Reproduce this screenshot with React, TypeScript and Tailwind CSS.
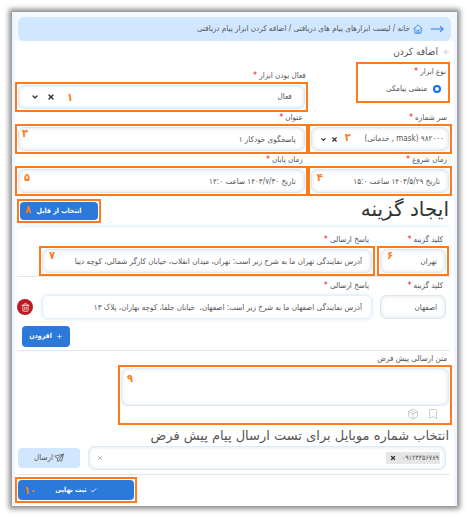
import React from 'react';
import { Bookmark, Check, ChevronDown, MoveRight, Package, Plus, Trash2, X } from 'lucide-react';
import { clsx } from 'clsx';

interface MarkProps {
  step?: string;
  stepClass?: string;
  className?: string;
  children: React.ReactNode;
}

// Numbered orange frame used for the walkthrough steps
const Mark: React.FC<MarkProps> = ({ step, stepClass = 'left-2 top-0', className, children }) => (
  <div
    className={clsx(
      'relative border-2 p-px',
      step === undefined ? 'border-transparent' : 'border-[#ff7a1a]',
      className
    )}
  >
    {children}
    {step && (
      <span className={clsx('pointer-events-none absolute text-[11px] font-bold leading-4 text-[#ff7a1a]', stepClass)}>
        {step}
      </span>
    )}
  </div>
);

interface LabelProps {
  htmlFor?: string;
  required?: boolean;
  className?: string;
  children: React.ReactNode;
}

const Label: React.FC<LabelProps> = ({ htmlFor, required = true, className, children }) => (
  <label htmlFor={htmlFor} className={clsx('block whitespace-nowrap text-[8px] leading-3 text-[#555]', className)}>
    {children}
    {required && <span className="text-red-600"> *</span>}
  </label>
);

const fieldClass =
  'h-6 w-full rounded-md border border-[#dfe6ec] bg-white text-[8px] text-[#555] outline-none shadow-[inset_0_0_4px_#dbe3ea]';

interface SelectProps {
  id: string;
  value: string;
  tight?: boolean;
}

const SelectField: React.FC<SelectProps> = ({ id, value, tight }) => (
  <div className={clsx(fieldClass, 'flex items-center', tight ? 'gap-1 pl-2 pr-1' : 'gap-2 pl-3 pr-3')}>
    <select id={id} className="min-w-0 flex-1 appearance-none bg-transparent outline-none">
      <option>{value}</option>
    </select>
    <button type="button" aria-label="پاک کردن">
      <X className={tight ? 'size-[7px]' : 'size-2'} strokeWidth={4} color="#333" />
    </button>
    <ChevronDown className={tight ? 'size-[7px]' : 'size-2'} strokeWidth={4} color="#333" />
  </div>
);

interface OptionRowProps {
  id: string;
  optionKey: string;
  answer: string;
  steps?: [string, string];
  removable?: boolean;
}

const OptionRow: React.FC<OptionRowProps> = ({ id, optionKey, answer, steps, removable }) => (
  <div className="flex gap-[2px] pr-px">
    <div className="w-1/6 shrink-0">
      <Label htmlFor={`${id}-key`} className="pr-[6px]">کلید گزینه</Label>
      <Mark step={steps?.[0]}>
        <input id={`${id}-key`} className={clsx(fieldClass, 'block px-2')} defaultValue={optionKey} />
      </Mark>
    </div>
    <div className="min-w-0 flex-1">
      <Label htmlFor={`${id}-answer`} className="pr-[6px]">پاسخ ارسالی</Label>
      <Mark step={steps?.[1]}>
        <input
          id={`${id}-answer`}
          className={clsx(
            'block h-6 w-full rounded-md border bg-white px-[9px] text-[8px] text-[#555] outline-none',
            steps ? 'border-[#dfe6ec] shadow-[inset_0_0_4px_#dbe3ea]' : 'border-[#e0efff] shadow-[0_0_4px_#d6e9ff]'
          )}
          defaultValue={answer}
        />
      </Mark>
    </div>
    <div className="flex w-5 shrink-0 items-end justify-end pb-[7px]">
      {removable && (
        <button type="button" aria-label="حذف" className="flex size-4 shrink-0 items-center justify-center rounded-full bg-[#bd1a22] text-white">
          <Trash2 className="size-[9px]" />
        </button>
      )}
    </div>
  </div>
);

const HomeIcon = () => (
  <svg viewBox="0 0 24 24" className="size-[10px]" fill="none" stroke="#2f80dd" strokeWidth="2" strokeLinejoin="round" strokeLinecap="round">
    <path d="M2 11.5 12 2l10 9.5" />
    <path d="M4.5 10v12h15V10" />
    <path d="M9.5 22v-7h5v7" />
  </svg>
);

const SendIcon = () => (
  <svg viewBox="0 0 24 24" className="size-[10px]" fill="none" stroke="#666" strokeWidth="2" strokeLinejoin="round" strokeLinecap="round">
    <path d="M22 3 1.5 7.5 8 13l1 8 4-4.5 4.5 3z" />
    <path d="M22 3 8 13M22 3l-9 13.5" />
  </svg>
);

export default function App() {
  return (
    <div dir="rtl" className="flow-root bg-white font-['DejaVu_Sans_Condensed','DejaVu_Sans',sans-serif] text-[#555]">
      <main className="m-3 border-x-[3px] border-[#eff6ff] bg-white pb-[3px] shadow-[0_0_5px_3px_#8b8b8b]">
        <div className="bg-[#f4f9ff] pt-[5px]">
          <nav className="mx-[3px] flex h-6 items-center gap-[7px] rounded-md bg-[#d1e7ff] pr-[7px] text-[8px]">
            <a href="#" aria-label="بازگشت"><MoveRight className="size-[14px]" color="#2f80dd" /></a>
            <a href="#" aria-label="خانه"><HomeIcon /></a>
            <span className="-mr-1 whitespace-nowrap">
              <a href="#">خانه</a> / <a href="#">لیست ابزارهای پیام های دریافتی</a> / اضافه کردن ابزار پیام دریافتی
            </span>
          </nav>
        </div>

        <h1 className="flex h-[21px] items-center gap-1 pr-1 text-[10px]">
          <Plus className="size-2" color="#bbb" />
          اضافه کردن
        </h1>

        <form onSubmit={(e) => e.preventDefault()}>
          <div className="grid grid-cols-[33fr_67fr] pr-[2px]">
            <fieldset className="ml-12 mr-[2px] h-[41px] border-2 border-[#ff7a1a] pr-[2px]">
              <legend className="float-right w-full text-[8px] leading-4">
                نوع ابزار <span className="text-red-600">*</span>
              </legend>
              <label className="clear-both flex items-center gap-[6px] pr-[5px] text-[8px] leading-[18px]">
                <input type="radio" name="kind" defaultChecked className="size-2 appearance-none rounded-full border-2 border-[#0d6efd] bg-white" />
                منشی پیامکی
              </label>
            </fieldset>
            <div className="self-end pt-2">
              <Label htmlFor="active" className="pr-[2px]">فعال بودن ابزار</Label>
              <Mark step="۱" stepClass="left-[50px] top-[6px]">
                <SelectField id="active" value="فعال" />
              </Mark>
            </div>
            <div>
              <Label htmlFor="number" className="pr-[5px]">سر شماره</Label>
              <Mark step="۲" stepClass="left-[35px] top-1">
                <SelectField id="number" value="۹۸۲۰۰۰ (mask , خدماتی)" tight />
              </Mark>
            </div>
            <div>
              <Label htmlFor="title" className="pr-[5px]">عنوان</Label>
              <Mark step="۳" stepClass="left-[5px] top-0">
                <input id="title" className={clsx(fieldClass, 'block px-2')} defaultValue="پاسخگوی خودکار ۱" />
              </Mark>
            </div>
            <div>
              <Label htmlFor="start" className="pr-[5px]">زمان شروع</Label>
              <Mark step="۴" stepClass="left-[7px] top-[2px]">
                <input id="start" className={clsx(fieldClass, 'block px-2')} defaultValue="تاریخ ۱۴۰۳/۵/۲۹ ساعت ۱۵:۰" />
              </Mark>
            </div>
            <div>
              <Label htmlFor="end" className="pr-[5px]">زمان پایان</Label>
              <Mark step="۵" stepClass="left-[7px] top-[2px]">
                <input id="end" className={clsx(fieldClass, 'block px-2')} defaultValue="تاریخ ۱۴۰۳/۷/۳۰ ساعت ۱۴:۰" />
              </Mark>
            </div>
          </div>

          <div className="flex h-[30px] items-center justify-between pl-[2px] pr-[5px]">
            <h2 className="pb-1 font-['DejaVu_Sans',sans-serif] text-[20px] leading-6 text-[#333]">ایجاد گزینه</h2>
            <Mark step="۸" stepClass="left-[6px] top-px">
              <button type="button" className="block h-[18px] w-[78px] rounded bg-[#2b79d8] text-[7px] font-bold text-white">
                انتخاب از فایل
              </button>
            </Mark>
          </div>

          <section className="ml-[2px] mr-1 rounded-t-md border-t border-[#e6f1fd] pt-[7px] shadow-[0_-1px_4px_#eef6ff]">
            <OptionRow
              id="tehran"
              optionKey="تهران"
              answer="آدرس نمایندگی تهران ما به شرح زیر است: تهران، میدان انقلاب، خیابان کارگر شمالی، کوچه دیبا"
              steps={['۶', '۷']}
            />
            <hr className="border-[#e4e6e8]" />
            <div className="pt-[3px]">
              <OptionRow
                id="isfahan"
                optionKey="اصفهان"
                answer="آدرس نمایندگی اصفهان ما به شرح زیر است: اصفهان،  خیابان جلفا، کوچه بهاران، پلاک ۱۳"
                removable
              />
            </div>
            <div className="flex justify-end pb-[3px] pl-[5px] pt-1">
              <button type="button" className="flex h-[21px] w-12 items-center justify-center gap-1 rounded bg-[#2b79d8] text-[7px] font-bold text-white">
                <Plus className="size-[7px]" />
                افزودن
              </button>
            </div>
            <hr className="border-[#e4e6e8]" />
          </section>

          <div className="pl-[103px] pr-[2px] pt-[2px]">
            <Label htmlFor="default-text" required={false} className="pr-[5px]">متن ارسالی پیش فرض</Label>
            <Mark step="۹" stepClass="left-[7px] top-1">
              <textarea
                id="default-text"
                className="block h-[38px] w-full resize-none rounded-md border border-[#dcebfa] bg-white p-2 text-[8px] outline-none shadow-[inset_0_0_4px_#dbe3ea]"
              />
              <div className="flex h-4 items-center gap-2 pr-[10px]">
                <button type="button" aria-label="نشانه"><Bookmark className="size-3" color="#ccc" strokeWidth={2} /></button>
                <button type="button" aria-label="بسته"><Package className="size-3" color="#ccc" strokeWidth={2} /></button>
              </div>
            </Mark>
          </div>

          <h2 className="pr-[5px] font-['DejaVu_Sans',sans-serif] text-[13px] leading-[21px]">
            انتخاب شماره موبایل برای تست ارسال پیام پیش فرض
          </h2>
          <div className="flex items-center gap-2 pl-[3px] pr-2">
            <div className="flex h-6 flex-1 items-center justify-between rounded-md border border-[#dcebfa] pl-[7px] pr-[5px] shadow-[inset_0_0_4px_#dbe3ea]">
              <span className="flex h-3 items-center gap-[6px] bg-[#e6e6e6] pl-1 pr-px text-[7px]">
                ۰۹۱۲۳۴۵۶۷۸۹
                <button type="button" aria-label="حذف شماره"><X className="size-[6px]" strokeWidth={5} color="#333" /></button>
              </span>
              <button type="button" aria-label="پاک کردن همه"><X className="size-2" color="#999" /></button>
            </div>
            <button type="button" className="flex h-5 w-[62px] items-center justify-center gap-px rounded bg-[#d1e7ff] text-[8px]">
              <SendIcon />
              ارسال
            </button>
          </div>
          <hr className="mb-[2px] ml-[3px] mr-1 mt-1 border-[#e4e6e8]" />
          <div className="flex justify-end">
            <Mark step="۱۰" stepClass="left-[7px] top-1">
              <button type="submit" className="flex h-5 w-[116px] items-center justify-center gap-[3px] rounded-sm bg-[#2b79d8] text-[7px] font-bold text-white">
                <Check className="size-[7px]" strokeWidth={3} />
                ثبت نهایی
              </button>
            </Mark>
          </div>
        </form>
      </main>
    </div>
  );
}
